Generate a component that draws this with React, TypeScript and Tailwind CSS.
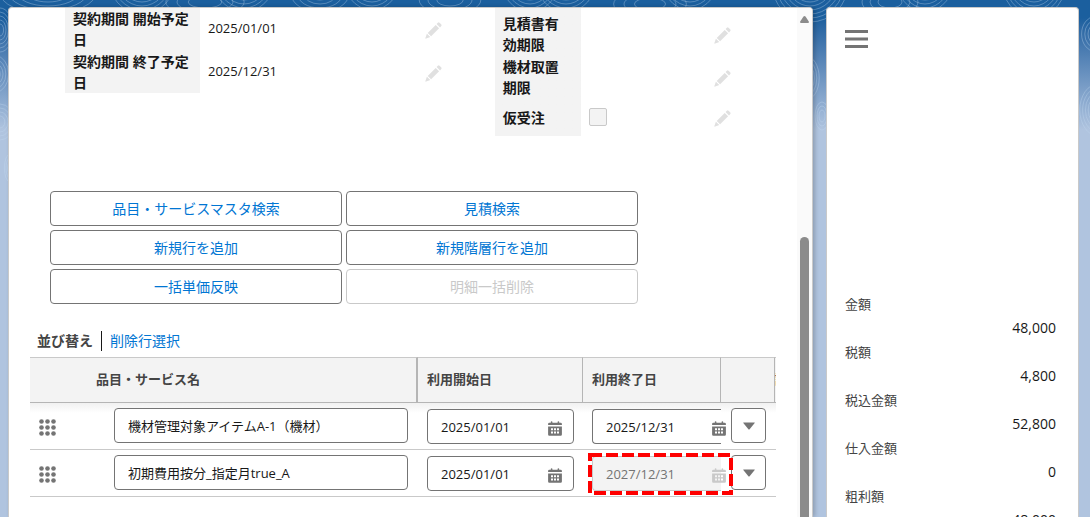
import { useState } from "react";

const totals = [
  { label: "金額", value: "48,000" },
  { label: "税額", value: "4,800" },
  { label: "税込金額", value: "52,800" },
  { label: "仕入金額", value: "0" },
  { label: "粗利額", value: "48,000" },
];

const actions = [
  { label: "品目・サービスマスタ検索" },
  { label: "見積検索" },
  { label: "新規行を追加" },
  { label: "新規階層行を追加" },
  { label: "一括単価反映" },
  { label: "明細一括削除", disabled: true },
];

const initialLines = [
  { name: "機材管理対象アイテムA-1（機材）", start: "2025/01/01", end: "2025/12/31", locked: false },
  { name: "初期費用按分_指定月true_A", start: "2025/01/01", end: "2027/12/31", locked: true },
];

// centre x, centre y, x/y ratio, ring count
const contours = [
  [48, -8, 2.2, 5],
  [142, -24, 0.9, 9],
  [205, 2, 2.8, 3],
  [244, -30, 0.8, 10],
  [320, -6, 1.6, 4],
  [372, -28, 0.8, 9],
  [450, 0, 2.2, 3],
  [530, -26, 0.8, 9],
  [566, -22, 0.9, 8],
  [650, 4, 2.6, 3],
  [690, -28, 0.8, 9],
  [810, -16, 1, 9],
  [890, 2, 2, 3],
  [925, -26, 0.8, 9],
  [1034, -24, 0.8, 10],
  [1096, 34, 0.8, 4],
  [1098, 110, 0.7, 6],
  [806, 78, 0.6, 5],
  [822, 116, 0.5, 3],
  [0, 30, 0.6, 5],
  [-4, 74, 0.7, 4],
  [0, 122, 0.8, 4],
  [10, 168, 0.4, 3],
];

function Contours() {
  return (
    <svg className="absolute inset-x-0 top-0 h-[220px] w-full" fill="none" stroke="#c4daf0" strokeOpacity="0.35" aria-hidden="true">
      {contours.map(([cx, cy, ratio, count], i) =>
        Array.from({ length: count }, (_, n) => (
          <ellipse key={`${i}-${n}`} cx={cx} cy={cy} rx={(6 + n * 4) * ratio} ry={6 + n * 4} />
        ))
      )}
    </svg>
  );
}

function Pencil({ label }: { label: string }) {
  return (
    <button type="button" aria-label={`${label}を編集`} className="mt-[3px] ml-auto">
      <svg width="17" height="17" viewBox="0 0 17 17" fill="#e0e0e0">
        <path d="M11.600 2 12.900.7q.8-.7 1.600 0L16.300 2.500q.7.8 0 1.600L15 5.400Z" />
        <path d="M10.700 2.900 14.100 6.300 6.100 14.200 2.700 10.900Z" />
        <path d="M1.900 11.700 5.300 15 1.200 16.600q-1 .3-.8-.7Z" />
      </svg>
    </button>
  );
}

function Calendar({ light }: { light?: boolean }) {
  return (
    <svg width="14" height="15" viewBox="0 0 14 15" fill={light ? "#c9c9c9" : "#747474"} aria-hidden="true">
      <path d="M1.300 1.700h1.500V1q0-.7.8-.7t.8.7v.7h5.200V1q0-.7.8-.7t.8.7v.7h1.500q1.200 0 1.200 1.200v1.200H.1V2.900q0-1.200 1.200-1.200Z" />
      <path
        fillRule="evenodd"
        d="M.1 5.600h13.800v8q0 1.200-1.200 1.200H1.300Q.1 14.800.1 13.600ZM3 7.200v2h2v-2Zm3 0v2h2v-2Zm3 0v2h2v-2ZM3 10.400v2h2v-2Zm3 0v2h2v-2Zm3 0v2h2v-2Z"
      />
    </svg>
  );
}

function DragHandle() {
  return (
    <svg width="17" height="17" viewBox="0 0 17 17" fill="#747474" aria-hidden="true">
      {[2.5, 8.5, 14.5].map((y) => [2.5, 8.5, 14.5].map((x) => <circle key={`${x}-${y}`} cx={x} cy={y} r="2.300" />))}
    </svg>
  );
}

function DetailColumn({ children, className }: { children: React.ReactNode; className: string }) {
  return <dl className={`text-[14px] leading-[21px] text-[#181818] ${className}`}>{children}</dl>;
}

function Details() {
  return (
    <section className="grid grid-cols-[429fr_236fr] items-start pl-14 pr-[66px]">
      <DetailColumn className="-mt-px pr-[53px]">
        {[
          ["契約期間 開始予定日", "2025/01/01"],
          ["契約期間 終了予定日", "2025/12/31"],
        ].map(([label, value]) => (
          <div key={label} className="flex h-[43px]">
            <dt className="flex w-[135px] items-center bg-[#f3f3f3] px-2 font-bold">{label}</dt>
            <dd className="flex flex-1 items-center pl-2 text-[13px]">
              {value}
              <Pencil label={label} />
            </dd>
          </div>
        ))}
      </DetailColumn>
      <DetailColumn className="bg-linear-to-r from-[#f3f3f3] from-[86px] to-transparent to-[86px] pt-1">
        {["見積書有効期限", "機材取置期限"].map((label) => (
          <div key={label} className="flex h-[43px]">
            <dt className="flex w-[86px] items-center pl-2 pr-3 font-bold">{label}</dt>
            <dd className="flex flex-1 items-center">
              <Pencil label={label} />
            </dd>
          </div>
        ))}
        <div className="flex h-[38px]">
          <dt className="flex w-[86px] items-center pl-2 font-bold">
            <label htmlFor="provisional">仮受注</label>
          </dt>
          <dd className="flex flex-1 items-center pl-2">
            <input
              id="provisional"
              type="checkbox"
              disabled
              className="size-[18px] appearance-none rounded-xs border border-[#c9c9c9] bg-[#f3f3f3]"
            />
            <Pencil label="仮受注" />
          </dd>
        </div>
      </DetailColumn>
    </section>
  );
}

const field = "h-[35px] rounded border border-[#747474] bg-white px-[13px] text-[13px] text-[#181818]";

function LineTable() {
  const [lines, setLines] = useState(initialLines);

  const update = (index: number, key: "name" | "start" | "end", value: string) => {
    setLines(lines.map((line, i) => (i === index ? { ...line, [key]: value } : line)));
  };

  return (
    <div className="mx-[21px] mt-1.5">
      <table className="w-full table-fixed border-separate border-spacing-0 text-[13px]">
        <colgroup>
          <col className="w-[84px]" />
          <col />
          <col className="w-[165px]" />
          <col className="w-[138px]" />
          <col className="w-[54px]" />
          <col className="w-[1px]" />
        </colgroup>
        <thead className="bg-[#f3f3f3] text-left text-[#444444]">
          <tr>
            <th colSpan={2} className="h-[46px] border-y border-r-2 border-[#b5b5b5] border-t-[#c9c9c9] pl-[66px]">品目・サービス名</th>
            <th className="border-y border-r border-[#b5b5b5] border-t-[#c9c9c9] pl-[9px]">利用開始日</th>
            <th className="border-y border-r border-[#b5b5b5] border-t-[#c9c9c9] pl-[9px]">利用終了日</th>
            <th className="border-y border-r border-[#b5b5b5] border-t-[#c9c9c9]"></th>
            <th className="overflow-hidden border-y border-[#b5b5b5] border-t-[#c9c9c9] p-0 whitespace-nowrap">計</th>
          </tr>
        </thead>
        <tbody>
          {lines.map((line, i) => (
            <tr
              key={i}
              className="align-top first:bg-linear-to-b first:from-[#f1f1f1] first:to-white first:to-[10px] *:h-[47px] *:border-b *:border-[#c9c9c9]"
            >
              <td className="pt-4 pl-[9px]">
                <button type="button" aria-label="並び替え" className="block">
                  <DragHandle />
                </button>
              </td>
              <td className="pt-[5px] pr-[10px]">
                <input
                  aria-label="品目・サービス名"
                  value={line.name}
                  onChange={(e) => update(i, "name", e.target.value)}
                  className={`${field} w-full`}
                />
              </td>
              <td className="pt-1.5 pr-[9px] pl-[9px]">
                <div className="relative">
                  <input
                    aria-label="利用開始日"
                    value={line.start}
                    onChange={(e) => update(i, "start", e.target.value)}
                    className={`${field} w-full`}
                  />
                  <button type="button" aria-label="日付を選択" className="absolute top-3 right-3">
                    <Calendar />
                  </button>
                </div>
              </td>
              <td className="pt-1.5 pl-[9px]">
                <div className="relative">
                  <input
                    aria-label="利用終了日"
                    value={line.end}
                    disabled={line.locked}
                    onChange={(e) => update(i, "end", e.target.value)}
                    className={`${field} w-full rounded-r-none border-r-0 disabled:border-[#c9c9c9] disabled:bg-[#f3f3f3] disabled:text-[#747474]`}
                  />
                  <button type="button" aria-label="日付を選択" disabled={line.locked} className="absolute top-3 -right-[5px]">
                    <Calendar light={line.locked} />
                  </button>
                  {line.locked && (
                    <svg className="pointer-events-none absolute -top-[3px] -left-[4px] z-10" width="146" height="42" fill="none" aria-hidden="true">
                      <rect x="2" y="2" width="141" height="38" stroke="#fe0000" strokeWidth="4" strokeDasharray="12 4" />
                    </svg>
                  )}
                </div>
              </td>
              <td className="pt-[5px] pl-[10px]">
                <button type="button" aria-label="行メニュー" className="flex size-[35px] items-center justify-center rounded border border-[#747474] bg-white">
                  <svg width="12" height="8" viewBox="0 0 12 8" fill="#747474">
                    <path d="M.5.5h11q.5 0 .2.5L6.600 7.200q-.6.600-1.200 0L.3 1Q0 .5.5.5Z" />
                  </svg>
                </button>
              </td>
              <td></td>
            </tr>
          ))}
        </tbody>
      </table>
    </div>
  );
}

export default function App() {
  return (
    <div className="relative h-screen overflow-hidden bg-[#b0c4df] bg-linear-to-b from-[#1b5f9e] from-[18px] to-[#b0c4df] to-[130px] font-['Open_Sans','Noto_Sans_CJK_JP',sans-serif]">
      <Contours />
      <div className="relative flex h-full gap-[13px] pt-[7px] pr-[11px] pl-2">
        <main className="flex min-w-0 flex-1 overflow-hidden rounded-t border border-b-0 border-[#c9c9c9] bg-white shadow-[2px_0_4px_rgba(0,0,0,0.2)]">
          <div className="min-w-0 flex-1">
            <Details />
            <div className="mt-[55px] mr-[159px] ml-[41px] grid grid-cols-2 gap-1">
              {actions.map((action) => (
                <button
                  key={action.label}
                  type="button"
                  disabled={action.disabled}
                  className="h-[35px] rounded border border-[#747474] text-[14px] text-[#0176d3] disabled:border-[#c9c9c9] disabled:text-[#c9c9c9]"
                >
                  {action.label}
                </button>
              ))}
            </div>
            <div className="mt-[27px] ml-7 flex h-5 text-[14px] leading-5">
              <span className="border-r border-[#181818] pr-2 font-bold text-[#444444]">並び替え</span>
              <a href="#delete" className="pl-2 text-[#0176d3]">削除行選択</a>
            </div>
            <LineTable />
          </div>
          <div className="flex w-[15px] flex-col items-center bg-[#fafafa] pt-2">
            <svg width="9" height="7" viewBox="0 0 9 7" fill="#8b8b8b" aria-hidden="true">
              <path d="M3.500.6q1-1.100 2 0L8.800 5.500Q9.300 7 8 7H1Q-.3 7 .2 5.500Z" />
            </svg>
            <div className="mt-[214px] w-[9px] flex-1 rounded-t-full bg-[#8b8b8b]"></div>
          </div>
        </main>

        <aside className="w-[253px] shrink-0 overflow-hidden rounded-t border border-b-0 border-[#c9c9c9] bg-white pt-[22px] pr-[22px] pl-[18px]">
          <button type="button" aria-label="メニュー" className="block">
            <svg width="23" height="18" viewBox="0 0 23 18" fill="#747474">
              <path d="M0 0h23v3H0ZM0 7.500h23v3H0ZM0 15h23v3H0Z" />
            </svg>
          </button>
          <dl className="mt-[244px] leading-6">
            {totals.map((row) => (
              <div key={row.label}>
                <dt className="text-[13px] text-[#444444]">{row.label}</dt>
                <dd className="h-6 text-right text-[14px] text-[#181818]">{row.value}</dd>
              </div>
            ))}
          </dl>
        </aside>
      </div>
    </div>
  );
}
